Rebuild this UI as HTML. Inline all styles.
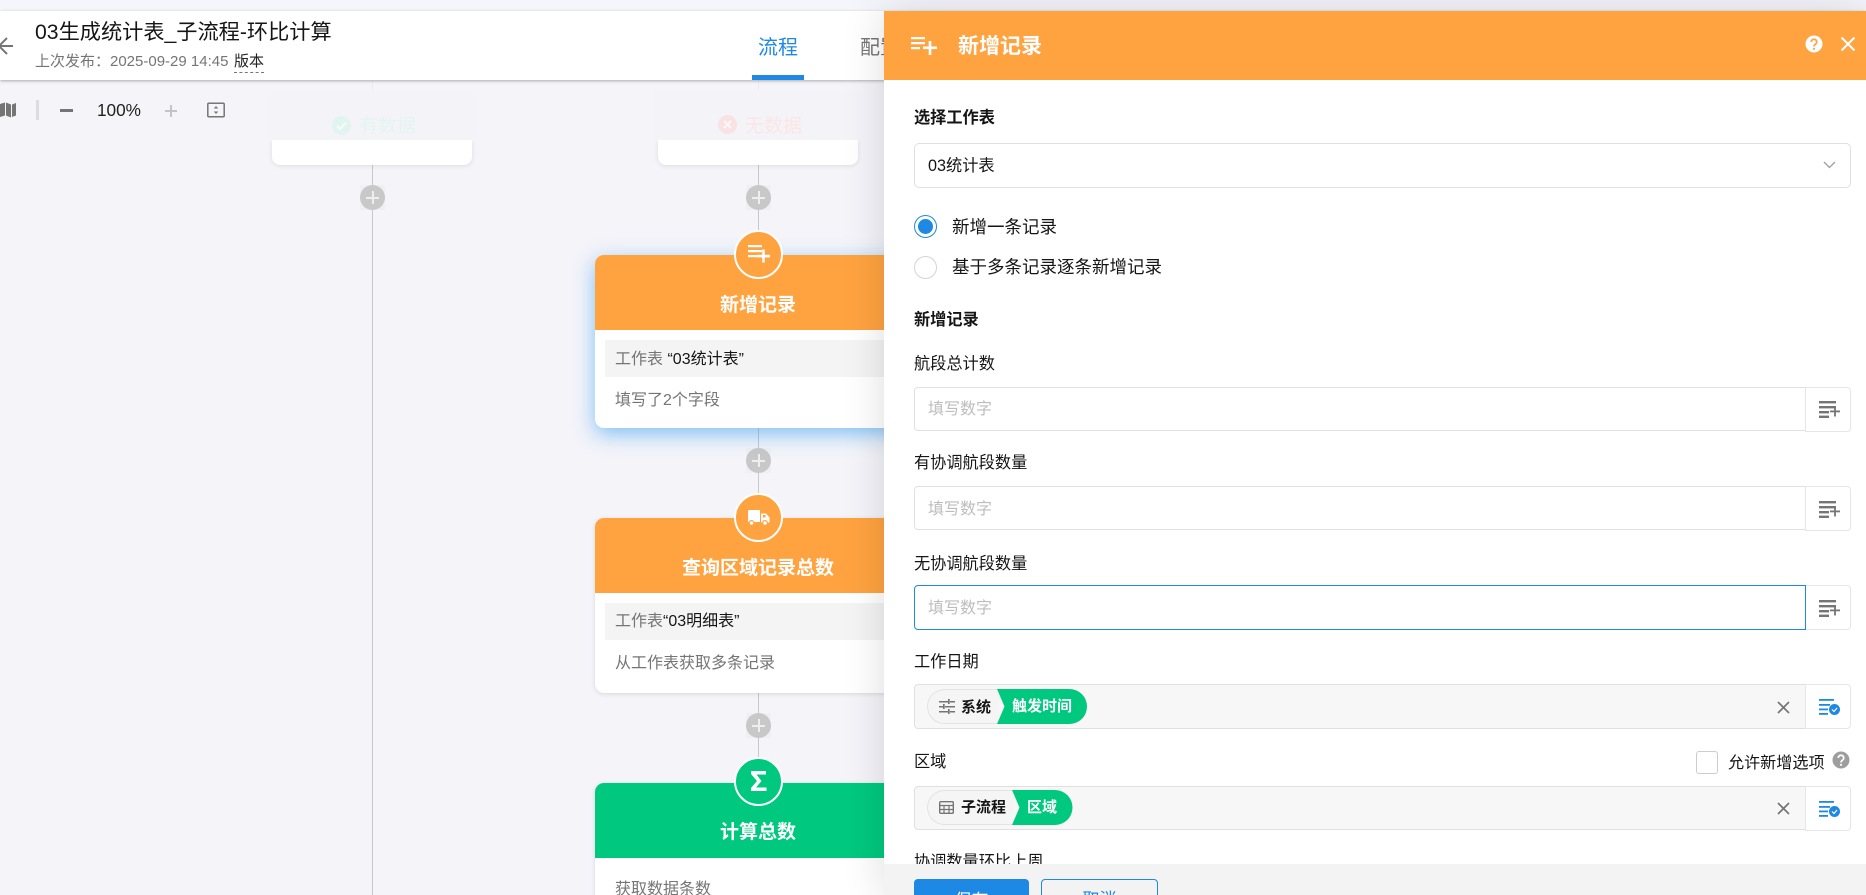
<!DOCTYPE html>
<html lang="zh">
<head>
<meta charset="utf-8">
<title>新增记录</title>
<style>
*{box-sizing:border-box;margin:0;padding:0}
html,body{width:1866px;height:895px;overflow:hidden;background:#f4f4f9;font-family:"Liberation Sans","Noto Sans CJK SC",sans-serif;color:#151515}
#root{position:relative;width:1866px;height:895px;overflow:hidden;background:#f4f4f9}
.a{position:absolute}
.t{position:absolute;white-space:nowrap;line-height:24px;height:24px}
.line{position:absolute;width:1px;background:#c9c9c9}
.plus{position:absolute;width:25px;height:25px;background:#f0f0f2}
.plus:before{content:"";position:absolute;inset:0;border-radius:50%;background:#c8c8c8}
.plus:after{content:"";position:absolute;left:6px;top:11.5px;width:13px;height:2px;background:#eee;box-shadow:none}
.plus i{position:absolute;left:11.5px;top:6px;width:2px;height:13px;background:#eee;z-index:1}
.card{position:absolute;left:595px;width:326px;background:#fff;border-radius:9px;box-shadow:0 1px 5px rgba(0,0,0,.12)}
.head{position:absolute;left:0;top:0;width:100%;height:75px;border-radius:9px 9px 0 0}
.ct{position:absolute;left:0;width:100%;text-align:center;color:#fff;font-weight:700;font-size:19px;line-height:24px}
.node{position:absolute;left:734px;width:49px;height:49px;border-radius:50%;border:2px solid #fff;z-index:3}
.node svg{position:absolute;left:0;top:0}
.gbox{position:absolute;left:10px;width:316px;height:37px;background:#f4f4f4}
.g{color:#757575}
.inp{position:absolute;left:914px;width:892px;background:#fff;border:1.5px solid #e0e0e0;border-radius:4px 0 0 4px}
.btn{position:absolute;left:1805px;width:46px;background:#fff;border:1.5px solid #e6e6e6;border-left:1px solid #e6e6e6;border-radius:0 4px 4px 0}
.lb{font-size:16.2px}
.ph{font-size:16px;color:#bdbdbd}
.chipg{position:absolute;left:927px;height:35px;background:#f5f5f5;border:1.5px solid #e3e3e3;border-right:0;border-radius:18px 0 0 18px}
</style>
</head>
<body>
<div id="root">
<!-- canvas -->
<div class="a" style="left:0;top:0;width:1866px;height:11px;background:#f5f6fb"></div>
<div class="line" style="left:372px;top:165px;height:730px"></div>
<div class="line" style="left:758px;top:165px;height:70px"></div>
<div class="line" style="left:758px;top:428px;height:95px"></div>
<div class="line" style="left:758px;top:692px;height:95px"></div>
<div class="line" style="left:372px;top:80px;height:10px;background:#ececf0"></div>
<div class="line" style="left:758px;top:80px;height:10px;background:#ececf0"></div>

<!-- branch cards -->
<div class="a" style="left:272px;top:140px;width:200px;height:25px;background:#fff;border-radius:0 0 8px 8px;box-shadow:0 1px 5px rgba(0,0,0,.1)"></div>
<div class="a" style="left:268px;top:90px;width:208px;height:50px;background:#f4f4f8"></div>
<svg class="a" style="left:332px;top:116px" width="19" height="19" viewBox="0 0 19 19"><circle cx="9.5" cy="9.5" r="9.5" fill="#e1f4f0"/><path d="M5 10l3 3 6-6.5" fill="none" stroke="#f6fbfa" stroke-width="2"/></svg>
<div class="t" style="left:359px;top:115px;font-size:19px;color:#e4f5f1">有数据</div>
<div class="a" style="left:658px;top:140px;width:200px;height:25px;background:#fff;border-radius:0 0 8px 8px;box-shadow:0 1px 5px rgba(0,0,0,.1)"></div>
<div class="a" style="left:654px;top:90px;width:208px;height:50px;background:#f4f4f8"></div>
<svg class="a" style="left:718px;top:115px" width="19" height="19" viewBox="0 0 19 19"><circle cx="9.5" cy="9.5" r="9.5" fill="#f9e2e3"/><path d="M6 6l7 7M13 6l-7 7" fill="none" stroke="#fbf6f7" stroke-width="2"/></svg>
<div class="t" style="left:745px;top:115px;font-size:19px;color:#fae6e6">无数据</div>

<div class="plus" style="left:360px;top:185px"><i></i></div>
<div class="plus" style="left:746px;top:185px"><i></i></div>
<div class="plus" style="left:746px;top:448px"><i></i></div>
<div class="plus" style="left:746px;top:713px"><i></i></div>

<!-- card 1 -->
<div class="card" style="top:255px;height:173px;box-shadow:0 6px 20px rgba(33,150,243,.55)">
  <div class="head" style="background:#ffa340"></div>
  <div class="ct" style="top:39px">新增记录</div>
  <div class="gbox" style="top:85px"></div>
  <div class="t" style="left:20px;top:93px;font-size:16px"><span class="g">工作表</span> “03统计表”</div>
  <div class="t g" style="left:20px;top:134px;font-size:16px">填写了2个字段</div>
</div>
<div class="node" style="top:230px;background:#ffa340">
  <svg width="45" height="45" viewBox="0 0 45 45" fill="#fff"><rect x="12" y="13" width="14" height="2.200"/><rect x="12" y="18" width="14" height="2.200"/><rect x="12" y="23" width="9" height="2.200"/><rect x="21" y="22.800" width="13" height="2.600"/><rect x="26.200" y="17.500" width="2.600" height="13"/></svg>
</div>

<!-- card 2 -->
<div class="card" style="top:518px;height:175px">
  <div class="head" style="background:#ffa340"></div>
  <div class="ct" style="top:39px">查询区域记录总数</div>
  <div class="gbox" style="top:85px"></div>
  <div class="t" style="left:20px;top:92px;font-size:16px"><span class="g">工作表</span>“03明细表”</div>
  <div class="t g" style="left:20px;top:134px;font-size:16px">从工作表获取多条记录</div>
</div>
<div class="node" style="top:493px;background:#ffa340">
  <svg width="45" height="45" viewBox="0 0 45 45" fill="#fff"><path d="M12 16a1 1 0 0 1 1-1h11v12H12z"/><path d="M25 18.500h5l3.500 4v5H25z"/><circle cx="15.500" cy="28" r="2.400" stroke="#ffa340" stroke-width="1.200"/><circle cx="29" cy="28" r="2.400" stroke="#ffa340" stroke-width="1.200"/><rect x="27" y="20" width="2.500" height="2.500" fill="#ffa340"/></svg>
</div>

<!-- card 3 -->
<div class="card" style="top:783px;height:140px">
  <div class="head" style="background:#00c97f"></div>
  <div class="ct" style="top:38px">计算总数</div>
  <div class="t g" style="left:20px;top:95px;font-size:16px">获取数据条数</div>
</div>
<div class="node" style="top:757px;background:#00c97f">
  <svg width="45" height="45" viewBox="0 0 45 45" fill="#fff"><path d="M15 12h15v3.500h-9.500l5 6.500-5.500 6.500H30.500V32H15v-3l6-7-6-7z"/></svg>
</div>

<!-- page header -->
<div class="a" style="left:0;top:11px;width:1866px;height:69px;background:#fff;box-shadow:0 1px 3px rgba(0,0,0,.3)"></div>
<svg class="a" style="left:0;top:36px" width="14" height="20" viewBox="0 0 14 20"><path d="M13 10H0M7 2L-1 10l8 8" fill="none" stroke="#757575" stroke-width="2"/></svg>
<div class="t" style="left:35px;top:21px;font-size:21.200px">03生成统计表_子流程-环比计算</div>
<div class="t g" style="left:35px;top:50px;font-size:15px">上次发布：2025-09-29 14:45</div>
<div class="t" style="left:234px;top:50px;font-size:15px;color:#222">版本</div>
<div class="a" style="left:234px;top:72px;width:30px;border-top:1px dashed #757575"></div>
<div class="t" style="left:758px;top:36px;font-size:20px;color:#1e88e5">流程</div>
<div class="a" style="left:752px;top:75px;width:52px;height:5px;background:#1e88e5"></div>
<div class="t g" style="left:860px;top:36px;font-size:20px">配置</div>

<!-- toolbar -->
<svg class="a" style="left:0;top:102px" width="17" height="16" viewBox="0 0 17 16" fill="#757575"><path d="M0 2l5-1.500v13L0 15zM6 .5l5 2v13l-5-2zM12 2.500L16 1v12.500L12 15z"/></svg>
<div class="a" style="left:36px;top:100px;width:3px;height:20px;background:#dcdcdc"></div>
<div class="a" style="left:60px;top:109px;width:13px;height:2.500px;background:#757575"></div>
<div class="t" style="left:97px;top:98px;font-size:17.200px;color:#222">100%</div>
<div class="a" style="left:165px;top:109.500px;width:12px;height:2px;background:#c4c4c4"></div>
<div class="a" style="left:170px;top:104.500px;width:2px;height:12px;background:#c4c4c4"></div>
<svg class="a" style="left:207px;top:102px" width="18" height="16" viewBox="0 0 18 16"><rect x=".8" y="1.300" width="16.400" height="13.400" rx="1" fill="none" stroke="#757575" stroke-width="1.500"/><path d="M9 4l2.200 2.500H6.800zM9 12l2.200-2.500H6.800z" fill="#757575"/></svg>

<!-- side panel -->
<div class="a" style="left:884px;top:11px;width:982px;height:884px;background:#fff;box-shadow:0 0 40px rgba(0,0,0,.14);z-index:5;overflow:hidden">
  <div class="a" style="left:0;top:0;width:982px;height:69px;background:#ffa340"></div>
</div>
<div class="a" style="left:0;top:0;width:1866px;height:895px;z-index:6">
  <svg class="a" style="left:911px;top:36px" width="27" height="20" viewBox="0 0 27 20" fill="#fff"><rect x="0" y="1" width="14" height="2.200"/><rect x="0" y="6" width="14" height="2.200"/><rect x="0" y="11" width="9" height="2.200"/><rect x="12" y="10.500" width="14" height="2.600"/><rect x="17.700" y="5" width="2.600" height="14"/></svg>
  <div class="t" style="left:958px;top:35px;font-size:21px;font-weight:700;color:#fff">新增记录</div>
  <svg class="a" style="left:1805px;top:35px" width="18" height="18" viewBox="0 0 18 18"><circle cx="9" cy="9" r="8.500" fill="#fff"/><path d="M6.300 7a2.700 2.700 0 1 1 4.200 2.200c-1 .7-1.500 1.100-1.500 2.300" fill="none" stroke="#ffa340" stroke-width="1.700"/><circle cx="9" cy="13.800" r="1.100" fill="#ffa340"/></svg>
  <svg class="a" style="left:1840px;top:36px" width="16" height="16" viewBox="0 0 16 16"><path d="M1.500 1.500l13 13M14.500 1.500l-13 13" stroke="#fff" stroke-width="2"/></svg>

  <div class="t lb" style="left:914px;top:106px;font-weight:700">选择工作表</div>
  <div class="a" style="left:914px;top:143px;width:937px;height:45px;border:1.500px solid #e0e0e0;border-radius:5px"></div>
  <div class="t lb" style="left:928px;top:154px">03统计表</div>
  <svg class="a" style="left:1823px;top:161px" width="13" height="8" viewBox="0 0 13 8"><path d="M1 1l5.500 5.500L12 1" fill="none" stroke="#9e9e9e" stroke-width="1.300"/></svg>

  <div class="a" style="left:914px;top:215px;width:23px;height:23px;border-radius:50%;border:1.500px solid #1e88e5;background:#fff"></div>
  <div class="a" style="left:918px;top:219px;width:15px;height:15px;border-radius:50%;background:#1e88e5"></div>
  <div class="t" style="left:952px;top:215px;font-size:17.500px">新增一条记录</div>
  <div class="a" style="left:914px;top:256px;width:23px;height:23px;border-radius:50%;border:1.500px solid #d4d4d4;background:#fff"></div>
  <div class="t" style="left:952px;top:255px;font-size:17.500px">基于多条记录逐条新增记录</div>

  <div class="t lb" style="left:914px;top:308px;font-weight:700">新增记录</div>

  <div class="t lb" style="left:914px;top:352px">航段总计数</div>
  <div class="inp" style="top:387px;height:44px"></div>
  <div class="btn" style="top:387px;height:45px"></div>
  <div class="t ph" style="left:928px;top:398px">填写数字</div>
  <svg class="a" style="left:1819px;top:401px" width="21" height="17" viewBox="0 0 21 17" fill="#757575"><rect y="0" width="17" height="2.400"/><rect y="5" width="17" height="2.400"/><rect y="10" width="10" height="2.400"/><rect y="14.600" width="10" height="2.400"/><rect x="11" y="9.500" width="10" height="1.800"/><rect x="15.100" y="5.500" width="1.800" height="10"/></svg>

  <div class="t lb" style="left:914px;top:451px">有协调航段数量</div>
  <div class="inp" style="top:486px;height:44px"></div>
  <div class="btn" style="top:486px;height:45px"></div>
  <div class="t ph" style="left:928px;top:498px">填写数字</div>
  <svg class="a" style="left:1819px;top:501px" width="21" height="17" viewBox="0 0 21 17" fill="#757575"><rect y="0" width="17" height="2.400"/><rect y="5" width="17" height="2.400"/><rect y="10" width="10" height="2.400"/><rect y="14.600" width="10" height="2.400"/><rect x="11" y="9.500" width="10" height="1.800"/><rect x="15.100" y="5.500" width="1.800" height="10"/></svg>

  <div class="t lb" style="left:914px;top:552px">无协调航段数量</div>
  <div class="btn" style="top:585px;height:45px"></div>
  <div class="inp" style="top:585px;height:45px;border-color:#1e88e5"></div>
  <div class="t ph" style="left:928px;top:597px">填写数字</div>
  <svg class="a" style="left:1819px;top:600px" width="21" height="17" viewBox="0 0 21 17" fill="#757575"><rect y="0" width="17" height="2.400"/><rect y="5" width="17" height="2.400"/><rect y="10" width="10" height="2.400"/><rect y="14.600" width="10" height="2.400"/><rect x="11" y="9.500" width="10" height="1.800"/><rect x="15.100" y="5.500" width="1.800" height="10"/></svg>

  <div class="t lb" style="left:914px;top:650px">工作日期</div>
  <div class="inp" style="top:684px;height:45px;background:#f7f7f7"></div>
  <div class="btn" style="top:684px;height:45px"></div>
  <div class="chipg" style="top:689px;width:72px"></div>
  <svg class="a" style="left:996px;top:689px" width="91" height="35" viewBox="0 0 91 35"><path d="M1 0H73.500a17.500 17.500 0 0 1 0 35H1L8.500 17.500z" fill="#00c97f"/></svg>
  <svg class="a" style="left:939px;top:699px" width="16" height="15" viewBox="0 0 16 15" fill="#757575"><rect y="2" width="9" height="1.500"/><rect x="11" y="2" width="5" height="1.500"/><rect x="9" y="0" width="1.700" height="5"/><rect y="7" width="4" height="1.500"/><rect x="6" y="7" width="10" height="1.500"/><rect x="4" y="5" width="1.700" height="5"/><rect y="12" width="9" height="1.500"/><rect x="11" y="12" width="5" height="1.500"/><rect x="9" y="10" width="1.700" height="5"/></svg>
  <div class="t" style="left:961px;top:696px;font-size:15px;font-weight:700">系统</div>
  <div class="t" style="left:1012px;top:695px;font-size:15px;font-weight:700;color:#fff">触发时间</div>
  <svg class="a" style="left:1777px;top:701px" width="13" height="13" viewBox="0 0 13 13"><path d="M1 1l11 11M12 1L1 12" stroke="#757575" stroke-width="1.700"/></svg>
  <svg class="a" style="left:1819px;top:699px" width="21" height="16" viewBox="0 0 21 16" fill="#1e88e5"><rect width="15" height="1.800"/><rect y="5" width="11" height="1.800"/><rect y="9.500" width="9" height="1.800"/><rect y="14" width="9" height="1.800"/><circle cx="15.500" cy="10.500" r="5.500"/><path d="M13 10.500l2 2 3-3.500" fill="none" stroke="#fff" stroke-width="1.200"/></svg>

  <div class="t lb" style="left:914px;top:750px">区域</div>
  <div class="a" style="left:1696px;top:751px;width:22px;height:23px;border:1.500px solid #ccc;border-radius:3px;background:#fff"></div>
  <div class="t" style="left:1728px;top:751px;font-size:16.100px">允许新增选项</div>
  <svg class="a" style="left:1832px;top:751px" width="18" height="18" viewBox="0 0 18 18"><circle cx="9" cy="9" r="8.500" fill="#9e9e9e"/><path d="M6.300 7a2.700 2.700 0 1 1 4.200 2.200c-1 .7-1.500 1.100-1.500 2.300" fill="none" stroke="#fff" stroke-width="1.700"/><circle cx="9" cy="13.800" r="1.100" fill="#fff"/></svg>

  <div class="inp" style="top:786px;height:44px;background:#f7f7f7"></div>
  <div class="btn" style="top:786px;height:45px"></div>
  <div class="chipg" style="top:790px;width:87px"></div>
  <svg class="a" style="left:1011px;top:790px" width="62" height="35" viewBox="0 0 62 35"><path d="M1 0H44a17.500 17.500 0 0 1 0 35H1L8.500 17.500z" fill="#00c97f"/></svg>
  <svg class="a" style="left:939px;top:801px" width="15" height="13" viewBox="0 0 15 13"><rect x=".7" y=".7" width="13.600" height="11.600" rx="1" fill="none" stroke="#757575" stroke-width="1.400"/><path d="M0 4.500h15M0 8.500h15M5 4.500V13M10 4.500V13" stroke="#757575" stroke-width="1.200"/></svg>
  <div class="t" style="left:961px;top:796px;font-size:15px;font-weight:700">子流程</div>
  <div class="t" style="left:1027px;top:796px;font-size:15px;font-weight:700;color:#fff">区域</div>
  <svg class="a" style="left:1777px;top:802px" width="13" height="13" viewBox="0 0 13 13"><path d="M1 1l11 11M12 1L1 12" stroke="#757575" stroke-width="1.700"/></svg>
  <svg class="a" style="left:1819px;top:801px" width="21" height="16" viewBox="0 0 21 16" fill="#1e88e5"><rect width="15" height="1.800"/><rect y="5" width="11" height="1.800"/><rect y="9.500" width="9" height="1.800"/><rect y="14" width="9" height="1.800"/><circle cx="15.500" cy="10.500" r="5.500"/><path d="M13 10.500l2 2 3-3.500" fill="none" stroke="#fff" stroke-width="1.200"/></svg>

  <div class="t lb" style="left:914px;top:850px">协调数量环比上周</div>

  <div class="a" style="left:884px;top:864px;width:982px;height:31px;background:#f3f3f3;overflow:hidden">
    <div class="a" style="left:30px;top:15px;width:115px;height:43px;background:#1e88e5;border-radius:4px;color:#fff;text-align:center;line-height:43px;font-size:17px">保存</div>
    <div class="a" style="left:157px;top:15px;width:117px;height:43px;border:1.500px solid #1e88e5;border-radius:4px;color:#1e88e5;text-align:center;line-height:40px;font-size:17px">取消</div>
  </div>
</div>
</div>
</body>
</html>
